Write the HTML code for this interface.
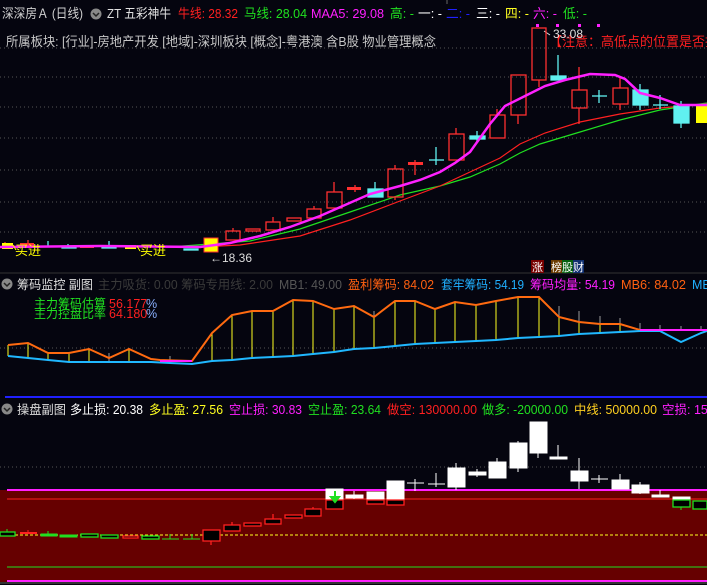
<!DOCTYPE html><html><head><meta charset="utf-8"><style>
html,body{margin:0;padding:0;background:#05050f;}
svg{display:block;font-family:"Liberation Sans","Noto Sans CJK SC",sans-serif;}
</style></head><body>
<svg width="707" height="585" viewBox="0 0 707 585" xmlns="http://www.w3.org/2000/svg">
<rect width="707" height="585" fill="#05050f"/>
<g stroke="#555" stroke-dasharray="1,3" stroke-width="1">
<line x1="0" y1="48" x2="707" y2="48"/><line x1="0" y1="77" x2="707" y2="77"/><line x1="0" y1="107" x2="707" y2="107"/><line x1="0" y1="138" x2="707" y2="138"/><line x1="0" y1="170" x2="707" y2="170"/><line x1="0" y1="202" x2="707" y2="202"/><line x1="0" y1="232" x2="707" y2="232"/>
</g>
<line x1="0" y1="273" x2="707" y2="273" stroke="#333"/>
<line x1="447" y1="0" x2="447" y2="4" stroke="#666"/>
<!-- header -->
<g font-size="13" lengthAdjust="spacingAndGlyphs">
<text x="2" y="18" fill="#d0d0d0" textLength="81" lengthAdjust="spacingAndGlyphs">深深房Ａ (日线)</text>
<circle cx="96" cy="14" r="5.5" fill="#888"/><path d="M93 13l3 3 3-3" stroke="#222" stroke-width="1.5" fill="none"/>
<text x="107" y="18" fill="#e0e0e0" textLength="64" lengthAdjust="spacingAndGlyphs">ZT 五彩神牛</text>
<text x="178" y="18" fill="#ff2020" textLength="60" lengthAdjust="spacingAndGlyphs">牛线: 28.32</text>
<text x="244" y="18" fill="#20e020" textLength="63" lengthAdjust="spacingAndGlyphs">马线: 28.04</text>
<text x="311" y="18" fill="#ff20ff" textLength="73" lengthAdjust="spacingAndGlyphs">MAA5: 29.08</text>
<text x="390" y="18" fill="#20e020" textLength="24" lengthAdjust="spacingAndGlyphs">高: -</text>
<text x="418" y="18" fill="#ffffff" textLength="24" lengthAdjust="spacingAndGlyphs">一: -</text>
<text x="446" y="18" fill="#2020ff" textLength="24" lengthAdjust="spacingAndGlyphs">二: -</text>
<text x="476" y="18" fill="#ffffff" textLength="24" lengthAdjust="spacingAndGlyphs">三: -</text>
<text x="505" y="18" fill="#ffff20" textLength="24" lengthAdjust="spacingAndGlyphs">四: -</text>
<text x="533" y="18" fill="#ff20ff" textLength="24" lengthAdjust="spacingAndGlyphs">六: -</text>
<text x="563" y="18" fill="#20e020" textLength="24" lengthAdjust="spacingAndGlyphs">低: -</text>
<text x="6" y="46" fill="#c8c8c8" textLength="430" lengthAdjust="spacingAndGlyphs">所属板块: [行业]-房地产开发 [地域]-深圳板块 [概念]-粤港澳 含B股 物业管理概念</text>
<text x="549" y="46" fill="#ff2020">【注意：高低点的位置是否找对</text>
</g>
<g fill="#ff20ff"><rect x="536" y="24" width="3" height="3"/><rect x="556" y="24" width="3" height="3"/><rect x="578" y="24" width="3" height="3"/><rect x="597" y="24" width="3" height="3"/></g>
<text x="553" y="38" font-size="12" fill="#ddd">33.08</text><path d="M550 35l-6-4" stroke="#ddd"/>
<!-- MA lines -->
<polyline fill="none" stroke="#20e020" stroke-width="1.2" points="170,247 250,241 300,229 350,212 400,195 440,186 470,177 500,164 520,153 540,144 580,132 620,120 660,110 700,104 707,103"/>
<polyline fill="none" stroke="#ff2020" stroke-width="1.2" points="200,247 240,245 300,236 350,220 400,201 440,186 470,172 500,158 520,144 545,133 580,122 620,114 660,108 707,104"/>
<!-- main red candles -->
<g stroke="#ff3030" fill="none" stroke-width="1.3">
<rect x="226" y="231" width="14" height="9"/><line x1="233" y1="228" x2="233" y2="231"/>
<rect x="246" y="229" width="14" height="2"/>
<rect x="266" y="222" width="14" height="8"/><line x1="273" y1="217" x2="273" y2="222"/>
<rect x="287" y="218" width="14" height="3"/>
<rect x="307" y="209" width="14" height="9"/><line x1="314" y1="206" x2="314" y2="209"/>
<rect x="327" y="192" width="15" height="16"/><line x1="334" y1="182" x2="334" y2="192"/>
<rect x="388" y="169" width="15" height="28"/><line x1="395" y1="165" x2="395" y2="169"/><line x1="395" y1="197" x2="395" y2="200"/>
<rect x="449" y="134" width="15" height="26"/><line x1="456" y1="128" x2="456" y2="134"/>
<rect x="490" y="115" width="15" height="23"/><line x1="497" y1="109" x2="497" y2="115"/>
<rect x="511" y="75" width="15" height="40"/><line x1="518" y1="115" x2="518" y2="124"/>
<rect x="532" y="28" width="14" height="52"/><line x1="539" y1="80" x2="539" y2="87"/>
<rect x="572" y="90" width="15" height="18"/><line x1="579" y1="67" x2="579" y2="90"/><line x1="579" y1="108" x2="579" y2="124"/>
<rect x="613" y="88" width="15" height="16"/><line x1="620" y1="78" x2="620" y2="88"/><line x1="620" y1="104" x2="620" y2="110"/>
<line x1="415" y1="160" x2="415" y2="175"/><line x1="355" y1="185" x2="355" y2="192"/><line x1="5" y1="242" x2="5" y2="245"/><line x1="28" y1="240" x2="28" y2="244"/>
</g>
<rect x="408" y="162" width="15" height="3" fill="#ff3030"/>
<rect x="347" y="187" width="14" height="3" fill="#ff3030"/>
<rect x="0" y="188" width="0" height="0"/>
<!-- cyan candles -->
<g fill="#60f0f0" stroke="#60f0f0" stroke-width="1.3">
<rect x="368" y="189" width="15" height="8"/><line x1="375" y1="182" x2="375" y2="189"/>
<line x1="429" y1="160" x2="444" y2="160"/><line x1="436" y1="147" x2="436" y2="165"/>
<rect x="470" y="136" width="15" height="3"/><line x1="477" y1="131" x2="477" y2="142"/>
<rect x="551" y="76" width="15" height="4"/><line x1="558" y1="55" x2="558" y2="76"/>
<line x1="592" y1="96" x2="607" y2="96"/><line x1="599" y1="90" x2="599" y2="103"/>
<rect x="633" y="90" width="15" height="15"/><line x1="640" y1="84" x2="640" y2="110"/>
<line x1="653" y1="105" x2="668" y2="105"/><line x1="660" y1="95" x2="660" y2="109"/>
<rect x="674" y="106" width="15" height="17"/><line x1="681" y1="101" x2="681" y2="128"/>
<line x1="48" y1="241" x2="48" y2="247"/><line x1="68" y1="244" x2="68" y2="247"/><line x1="109" y1="241" x2="109" y2="247"/>
<rect x="62" y="247" width="14" height="1"/><rect x="102" y="247" width="14" height="1"/>
<rect x="184" y="249" width="14" height="1"/>
</g>
<rect x="204" y="238" width="14" height="14" fill="#ffff00" stroke="#ff3030"/>
<rect x="2" y="243" width="11" height="6" fill="#ffff00"/>
<rect x="125" y="245" width="11" height="4" fill="#ffff00"/>
<rect x="696" y="104" width="11" height="19" fill="#ffff00"/>
<rect x="20" y="243" width="14" height="3" fill="#ff3030"/>
<rect x="80" y="246" width="14" height="2" fill="#ff3030"/>
<polyline fill="none" stroke="#ff20ff" stroke-width="2.5" points="0,247 100,246 200,247 230,243 260,236 290,227 320,216 345,205 370,194 400,186 420,180 440,172 455,163 470,152 490,124 505,106 525,96 545,86 565,80 590,74 615,75 625,79 640,93 660,98 680,105 707,105"/>
<text x="15" y="255" font-size="13" fill="#ffff00">买进</text><text x="140" y="255" font-size="13" fill="#ffff00">买进</text>
<path d="M13 245l3 5M137 246l3 5" stroke="#ffff00"/>
<text x="210" y="262" font-size="12" fill="#ddd">←18.36</text>
<rect x="531" y="260" width="13" height="13" fill="#700"/><text x="532" y="271" font-size="11" fill="#fff">涨</text>
<rect x="551" y="260" width="11" height="13" fill="#6a3a00"/><rect x="562" y="260" width="11" height="13" fill="#056010"/><rect x="573" y="260" width="11" height="13" fill="#103070"/>
<text x="551" y="271" font-size="11" fill="#fff">榜股财</text>
<!-- panel 2 -->
<g font-size="12.5">
<circle cx="7" cy="284" r="5.5" fill="#888"/><path d="M4 283l3 3 3-3" stroke="#222" stroke-width="1.5" fill="none"/>
<text x="17" y="289" fill="#ddd" textLength="76" lengthAdjust="spacingAndGlyphs">筹码监控 副图</text>
<text x="98" y="289" fill="#3a3a3a" textLength="175" lengthAdjust="spacingAndGlyphs">主力吸货: 0.00 筹码专用线: 2.00</text>
<text x="279" y="289" fill="#555" textLength="63" lengthAdjust="spacingAndGlyphs">MB1: 49.00</text>
<text x="348" y="289" fill="#ff6010" textLength="86" lengthAdjust="spacingAndGlyphs">盈利筹码: 84.02</text>
<text x="441" y="289" fill="#20b0ff" textLength="83" lengthAdjust="spacingAndGlyphs">套牢筹码: 54.19</text>
<text x="530" y="289" fill="#ff20ff" textLength="85" lengthAdjust="spacingAndGlyphs">筹码均量: 54.19</text>
<text x="621" y="289" fill="#ff6010" textLength="65" lengthAdjust="spacingAndGlyphs">MB6: 84.02</text>
<text x="692" y="289" fill="#20b0ff">MB</text>
<text x="34" y="308" fill="#20e020" textLength="72" lengthAdjust="spacingAndGlyphs">主力筹码估算</text><text x="109" y="308" fill="#ff2020">56.177</text><text x="146" y="308" fill="#8ab0ff">%</text>
<text x="34" y="318" fill="#20e020" textLength="72" lengthAdjust="spacingAndGlyphs">主力控盘比率</text><text x="109" y="318" fill="#ff2020">64.180</text><text x="146" y="318" fill="#8ab0ff">%</text>
</g>
<line x1="0" y1="348" x2="707" y2="348" stroke="#555" stroke-dasharray="1,3"/>
<g stroke="#ffff20" stroke-width="1">
<line x1="8" y1="345" x2="8" y2="356"/><line x1="28" y1="343" x2="28" y2="358"/><line x1="48" y1="353" x2="48" y2="360"/><line x1="69" y1="353" x2="69" y2="362"/><line x1="89" y1="349" x2="89" y2="362"/><line x1="129" y1="349" x2="129" y2="362"/>
<line x1="212" y1="333" x2="212" y2="361"/><line x1="232" y1="315" x2="232" y2="360"/><line x1="252" y1="311" x2="252" y2="358"/><line x1="273" y1="311" x2="273" y2="357"/><line x1="293" y1="300" x2="293" y2="356"/><line x1="313" y1="301" x2="313" y2="354"/><line x1="334" y1="309" x2="334" y2="352"/><line x1="354" y1="306" x2="354" y2="349"/><line x1="374" y1="317" x2="374" y2="348"/><line x1="395" y1="301" x2="395" y2="346"/><line x1="415" y1="301" x2="415" y2="344"/><line x1="435" y1="309" x2="435" y2="343"/><line x1="455" y1="302" x2="455" y2="342"/><line x1="476" y1="305" x2="476" y2="341"/><line x1="496" y1="301" x2="496" y2="340"/><line x1="518" y1="297" x2="518" y2="338"/><line x1="539" y1="297" x2="539" y2="337"/><line x1="559" y1="317" x2="559" y2="336"/><line x1="579" y1="322" x2="579" y2="334"/><line x1="600" y1="324" x2="600" y2="333"/><line x1="620" y1="324" x2="620" y2="332"/>
</g>
<g stroke="#999"><line x1="109" y1="353" x2="109" y2="362"/><line x1="170" y1="356" x2="170" y2="363"/><line x1="374" y1="311" x2="374" y2="317"/><line x1="559" y1="306" x2="559" y2="317"/><line x1="579" y1="311" x2="579" y2="322"/><line x1="600" y1="316" x2="600" y2="324"/><line x1="620" y1="318" x2="620" y2="324"/><line x1="640" y1="323" x2="640" y2="330"/><line x1="660" y1="325" x2="660" y2="331"/><line x1="681" y1="326" x2="681" y2="331"/><line x1="701" y1="326" x2="701" y2="331"/></g>
<polyline fill="none" stroke="#ff6a10" stroke-width="2" points="8,345 28,343 48,353 69,353 89,349 109,358 129,349 151,359 160,360 192,361 212,333 232,315 252,311 273,311 293,300 313,301 334,309 354,306 374,317 395,301 415,301 435,309 455,302 476,305 496,301 518,297 539,297 559,317 579,322 600,324 620,324 640,330 707,330"/>
<polyline fill="none" stroke="#20b8ff" stroke-width="2" points="8,356 28,358 48,360 69,362 109,362 151,362 170,363 192,364 212,361 232,360 252,358 273,357 293,356 313,354 334,352 354,349 374,348 395,346 415,344 435,343 455,342 476,341 496,340 518,338 539,337 559,336 579,334 600,333 620,332 640,331 660,331 681,342 701,333 707,331"/>
<line x1="160" y1="361" x2="192" y2="361" stroke="#ff20ff" stroke-width="2"/>
<line x1="640" y1="330" x2="707" y2="330" stroke="#ff20ff" stroke-width="2"/>
<!-- panel 3 -->
<line x1="5" y1="397" x2="707" y2="397" stroke="#2020ff" stroke-width="2"/>
<g font-size="12.5">
<circle cx="7" cy="409" r="5.5" fill="#888"/><path d="M4 408l3 3 3-3" stroke="#222" stroke-width="1.5" fill="none"/>
<text x="17" y="414" fill="#ddd" textLength="49" lengthAdjust="spacingAndGlyphs">操盘副图</text>
<text x="70" y="414" fill="#fff" textLength="73" lengthAdjust="spacingAndGlyphs">多止损: 20.38</text>
<text x="149" y="414" fill="#ffff20" textLength="74" lengthAdjust="spacingAndGlyphs">多止盈: 27.56</text>
<text x="229" y="414" fill="#ff20ff" textLength="73" lengthAdjust="spacingAndGlyphs">空止损: 30.83</text>
<text x="308" y="414" fill="#20e020" textLength="73" lengthAdjust="spacingAndGlyphs">空止盈: 23.64</text>
<text x="387" y="414" fill="#ff2020" textLength="90" lengthAdjust="spacingAndGlyphs">做空: 130000.00</text>
<text x="482" y="414" fill="#20e020" textLength="86" lengthAdjust="spacingAndGlyphs">做多: -20000.00</text>
<text x="574" y="414" fill="#ffd020" textLength="83" lengthAdjust="spacingAndGlyphs">中线: 50000.00</text>
<text x="662" y="414" fill="#ff20ff">空损: 15</text>
</g>
<line x1="0" y1="467" x2="707" y2="467" stroke="#555" stroke-dasharray="1,3"/>
<rect x="0" y="490" width="707" height="92" fill="#660000"/>
<line x1="7" y1="490" x2="707" y2="490" stroke="#ff20ff" stroke-width="2"/>
<line x1="7" y1="581" x2="707" y2="581" stroke="#ff20ff" stroke-width="2"/>
<line x1="7" y1="499" x2="707" y2="499" stroke="#ff2020" stroke-width="1"/>
<line x1="7" y1="567" x2="707" y2="567" stroke="#20e020" stroke-width="1"/>
<line x1="0" y1="535" x2="707" y2="535" stroke="#ffff20" stroke-dasharray="3,2" stroke-width="1"/>
<line x1="0" y1="583" x2="707" y2="583" stroke="#333" stroke-width="2"/>
<!-- white candles -->
<g fill="#fff" stroke="#fff" stroke-width="1">
<rect x="326" y="489" width="17" height="11"/>
<rect x="346" y="495" width="17" height="3"/><line x1="354" y1="491" x2="354" y2="499"/>
<rect x="367" y="492" width="17" height="8"/>
<rect x="387" y="481" width="17" height="19"/>
<line x1="407" y1="483" x2="424" y2="483"/><line x1="415" y1="479" x2="415" y2="491"/>
<line x1="428" y1="484" x2="445" y2="484"/><line x1="436" y1="473" x2="436" y2="487"/>
<rect x="448" y="468" width="17" height="19"/><line x1="456" y1="463" x2="456" y2="490"/>
<rect x="469" y="472" width="17" height="3"/><line x1="477" y1="469" x2="477" y2="477"/>
<rect x="489" y="462" width="17" height="16"/><line x1="497" y1="458" x2="497" y2="462"/>
<rect x="510" y="443" width="17" height="25"/><line x1="518" y1="441" x2="518" y2="472"/>
<rect x="530" y="422" width="17" height="31"/><line x1="538" y1="453" x2="538" y2="458"/>
<rect x="550" y="457" width="17" height="2"/><line x1="558" y1="445" x2="558" y2="457"/>
<rect x="571" y="471" width="17" height="10"/><line x1="579" y1="458" x2="579" y2="489"/>
<line x1="591" y1="479" x2="608" y2="479"/><line x1="599" y1="475" x2="599" y2="483"/>
<rect x="612" y="480" width="17" height="9"/><line x1="620" y1="474" x2="620" y2="480"/>
<rect x="632" y="485" width="17" height="8"/><line x1="640" y1="482" x2="640" y2="494"/>
<rect x="652" y="495" width="17" height="2"/><line x1="660" y1="490" x2="660" y2="495"/>
<rect x="673" y="497" width="17" height="3"/>
</g>
<g fill="#000" stroke="#ff2020" stroke-width="1.3">
<rect x="326" y="500" width="17" height="9"/><rect x="367" y="500" width="17" height="4"/><rect x="387" y="500" width="17" height="5"/>
<rect x="203" y="530" width="17" height="11"/><line x1="211" y1="541" x2="211" y2="545"/>
<rect x="224" y="525" width="16" height="6"/><line x1="232" y1="522" x2="232" y2="525"/>
<rect x="244" y="523" width="17" height="3"/>
<rect x="265" y="519" width="16" height="5"/><line x1="273" y1="514" x2="273" y2="519"/>
<rect x="285" y="515" width="17" height="3"/>
<rect x="305" y="509" width="16" height="7"/><line x1="313" y1="507" x2="313" y2="509"/>
<rect x="123" y="536" width="15" height="2"/>
</g>
<rect x="20" y="532" width="17" height="2" fill="#ff2020"/><line x1="28" y1="530" x2="28" y2="532" stroke="#ff2020"/>
<g fill="#000" stroke="#20e020" stroke-width="1.3">
<rect x="0" y="532" width="15" height="4"/><rect x="81" y="534" width="17" height="3"/><rect x="101" y="535" width="17" height="3"/><rect x="142" y="536" width="17" height="3"/>
<rect x="673" y="500" width="17" height="7"/><rect x="693" y="501" width="14" height="8"/>
</g>
<g fill="#20e020" stroke="#20e020"><rect x="41" y="534" width="16" height="2"/><rect x="60" y="535" width="17" height="2"/><line x1="162" y1="539" x2="179" y2="539"/><line x1="183" y1="539" x2="200" y2="539"/><line x1="48" y1="531" x2="48" y2="534"/><line x1="7" y1="529" x2="7" y2="532"/><line x1="170" y1="534" x2="170" y2="539"/><line x1="192" y1="534" x2="192" y2="539"/><line x1="681" y1="507" x2="681" y2="510"/></g>
<path d="M335 491v9M331 497l4 5 4-5z" stroke="#20e020" fill="#20e020" stroke-width="2"/>
</svg>
</body></html>
